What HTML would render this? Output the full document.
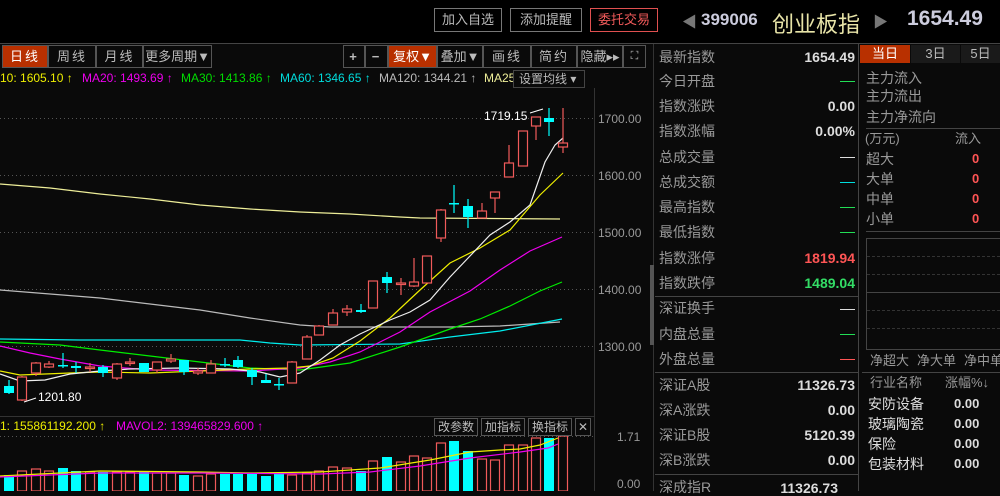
<!DOCTYPE html>
<html><head><meta charset="utf-8"><style>
*{margin:0;padding:0;box-sizing:border-box}
body{width:1000px;height:491px;background:#0a0a0a;overflow:hidden;position:relative;font-family:"Liberation Sans","Noto Sans CJK SC",sans-serif;color:#aaa}
.a{position:absolute;white-space:nowrap}
.btn{position:absolute;border:1px solid #777;color:#bbb;font-size:13px;text-align:center;line-height:22px;height:24px;top:8px}
.tab{position:absolute;top:45px;height:23px;border:1px solid #555;color:#bbb;font-size:13px;text-align:center;line-height:21px;letter-spacing:2px;white-space:nowrap}
.lab{position:absolute;left:659px;font-size:14px;color:#999;line-height:16px;white-space:nowrap}
.val{position:absolute;right:145px;font-size:14px;font-weight:bold;color:#ddd;line-height:16px;font-family:"Liberation Sans",sans-serif;white-space:nowrap}
.dash{position:absolute;left:840px;width:15px;height:1px}
.r{position:absolute;font-size:13px;color:#999;line-height:16px;white-space:nowrap}
</style></head><body>
<div class="a" style="left:0;top:0;width:1000px;height:43px;background:#000"></div>
<div class="btn" style="left:434px;width:68px">加入自选</div>
<div class="btn" style="left:510px;width:72px">添加提醒</div>
<div class="btn" style="left:590px;width:68px;border-color:#e05050;color:#f05a5a">委托交易</div>
<div class="a" style="left:682px;top:11px;color:#777;font-size:15px">◀</div>
<div class="a" style="left:701px;top:10px;color:#ccd;font-size:17px;font-weight:bold">399006</div>
<div class="a" style="left:772px;top:7px;color:#e8e4a8;font-size:22px">创业板指</div>
<div class="a" style="left:873px;top:11px;color:#777;font-size:15px">▶</div>
<div class="a" style="left:907px;top:7px;color:#ccd;font-size:21px;font-weight:bold">1654.49</div>
<div class="a" style="left:0;top:43px;width:1000px;height:1px;background:#444"></div>

<div class="tab" style="left:2px;width:46px;background:#b83000;color:#fff">日线</div>
<div class="tab" style="left:48px;width:48px">周线</div>
<div class="tab" style="left:96px;width:47px">月线</div>
<div class="tab" style="left:143px;width:69px;letter-spacing:0">更多周期▼</div>
<div class="tab" style="left:343px;width:22px;font-weight:bold">+</div>
<div class="tab" style="left:365px;width:23px;font-weight:bold">−</div>
<div class="tab" style="left:388px;width:49px;background:#b83000;color:#fff;letter-spacing:0">复权▼</div>
<div class="tab" style="left:437px;width:46px;letter-spacing:0">叠加▼</div>
<div class="tab" style="left:483px;width:48px">画线</div>
<div class="tab" style="left:531px;width:46px">简约</div>
<div class="tab" style="left:577px;width:46px;letter-spacing:0">隐藏▸▸</div>
<div class="tab" style="left:623px;width:23px;letter-spacing:0;font-size:11px">⛶</div>

<div class="a" style="left:0;top:71px;font-size:12px;color:#ee0">10: 1605.10 ↑</div>
<div class="a" style="left:82px;top:71px;font-size:12px;color:#e0e">MA20: 1493.69 ↑</div>
<div class="a" style="left:181px;top:71px;font-size:12px;color:#0d0">MA30: 1413.86 ↑</div>
<div class="a" style="left:280px;top:71px;font-size:12px;color:#0dd">MA60: 1346.65 ↑</div>
<div class="a" style="left:379px;top:71px;font-size:12px;color:#bbb">MA120: 1344.21 ↑</div>
<div class="a" style="left:484px;top:71px;font-size:12px;color:#ee9">MA25</div>
<div class="a" style="left:513px;top:70px;width:72px;height:18px;border:1px solid #444;background:#0a0a0a;font-size:12px;color:#bbb;line-height:16px;padding-left:5px">设置均线 ▾</div>

<svg class="a" style="left:0;top:0" width="655" height="491">
<g stroke="#555" stroke-dasharray="1 3">
<line x1="0" y1="118.5" x2="594" y2="118.5"/><line x1="0" y1="175.5" x2="594" y2="175.5"/><line x1="0" y1="232.5" x2="594" y2="232.5"/><line x1="0" y1="289.5" x2="594" y2="289.5"/><line x1="0" y1="346.5" x2="594" y2="346.5"/><line x1="0" y1="436.5" x2="594" y2="436.5"/>
</g>
<line x1="594.5" y1="88" x2="594.5" y2="491" stroke="#333"/>
<line x1="653.5" y1="44" x2="653.5" y2="491" stroke="#333"/>
<line x1="0" y1="416.5" x2="594" y2="416.5" stroke="#333"/>
<rect x="650" y="265" width="4" height="80" fill="#555"/>
<g font-family="Liberation Sans" font-size="12" fill="#999">
<text x="598" y="123">1700.00</text><text x="598" y="180">1600.00</text><text x="598" y="237">1500.00</text><text x="598" y="294">1400.00</text><text x="598" y="351">1300.00</text>
<text x="617" y="441">1.71</text><text x="617" y="488">0.00</text>
</g>
<g fill="none" stroke-width="1.2">
<polyline stroke="#ee9" points="0,184 50,188 100,194 150,199 200,205 250,209 300,212 350,214 400,217 420,218 560,219"/>
<polyline stroke="#bbb" points="0,290 50,294 100,298 150,304 200,310 250,318 300,325 330,327 350,327 450,327 500,326 560,322"/>
<polyline stroke="#0ee" points="0,339 80,340 240,340 270,343 300,345 400,344 450,337 500,331 562,319"/>
<polyline stroke="#0e0" points="0,342 60,345 100,350 150,356 200,362 250,368 300,370 350,363 400,347 450,329 480,319 510,306 540,291 562,282"/>
<polyline stroke="#e0e" points="0,346 30,353 60,359 100,366 150,370 250,371 300,368 330,362 360,352 400,332 430,312 470,291 500,270 530,251 562,237"/>
<polyline stroke="#ee0" points="0,371 20,375 70,373 100,372 150,373 200,371 250,369 290,368 310,366 333,358 360,341 390,318 420,290 450,263 480,248 510,230 540,195 563,173"/>
<polyline stroke="#eee" points="0,374 20,381 45,380 70,374 100,371 130,369 180,368 230,369 260,372 280,377 300,373 320,360 340,345 360,334 390,320 410,312 430,300 450,277 470,256 490,235 510,222 530,205 545,162 555,145 563,138"/>
</g>
<g id="c" stroke-width="1.2"></g>
<g fill="#fff" font-family="Liberation Sans" font-size="12"><text x="38" y="401">1201.80</text><text x="484" y="120">1719.15</text></g>
<polyline points="24,402 36,398" stroke="#fff" fill="none"/><polyline points="530,113 543,109" stroke="#fff" fill="none"/>
<g id="v" stroke-width="1.2"></g>
<polyline fill="none" stroke="#ee0" stroke-width="1.2" points="0,476 100,471 200,472 250,473 320,472 380,468 430,460 470,452 500,450 520,449 540,445 558,438"/>
<polyline fill="none" stroke="#e0e" stroke-width="1.2" points="0,477 100,473 200,473 320,474 370,472 420,466 470,458 520,452 548,448 558,444"/>
</svg>
<script>
var C=[[9,'c',386,393,380,394],[22,'r',377,400,376,401],[36,'r',363,373,362,376],[49,'r',364,367,361,368],[63,'c',365,366,353,368],[76,'c',366,368,362,373],[90,'r',367,368,363,372],[103,'c',367,373,365,377],[117,'r',364,378,363,380],[130,'r',362,363,358,366],[144,'c',363,372,363,372],[157,'r',362,370,362,373],[171,'r',359,361,354,363],[184,'c',360,372,360,375],[198,'r',371,373,368,375],[211,'r',364,373,360,373],[225,'c',364,365,358,367],[238,'c',360,367,356,368],[252,'c',370,377,368,385],[266,'c',380,383,374,383],[279,'c',384,385,378,390],[292,'r',362,383,361,383],[307,'r',337,359,335,359],[319,'r',326,335,325,335],[333,'r',313,325,309,325],[347,'r',309,312,305,316],[361,'c',310,312,304,313],[373,'r',281,308,281,308],[387,'c',277,283,272,293],[401,'r',283,284,278,295],[414,'r',282,286,258,287],[427,'r',256,283,256,283],[441,'r',210,238,209,242],[454,'c',203,204,185,213],[468,'c',206,217,199,228],[482,'r',211,218,203,218],[495,'r',192,198,192,213],[509,'r',163,177,145,177],[523,'r',131,166,131,166],[536,'r',117,126,117,140],[549,'c',118,122,108,136],[563,'r',143,147,108,153]];
var V=[475,471,469,471,468,471,472,472,472,472,472,473,473,475,476,474,474,474,473,476,473,475,473,471,467,468,471,461,457,462,456,458,443,441,451,459,460,445,445,438,438,436];
var h='',v='';
C.forEach(function(k,i){var col=k[1]=='r'?'#f05a5a':'#0ff';
h+='<line x1="'+k[0]+'" y1="'+k[4]+'" x2="'+k[0]+'" y2="'+k[5]+'" stroke="'+col+'"/>';
var bh=Math.max(k[3]-k[2],1.5);
if(k[1]=='r')h+='<rect x="'+(k[0]-4.5)+'" y="'+k[2]+'" width="9" height="'+bh+'" fill="#0a0a0a" stroke="'+col+'"/>';
else h+='<rect x="'+(k[0]-5)+'" y="'+k[2]+'" width="10" height="'+bh+'" fill="'+col+'"/>';
var t=V[i];
if(k[1]=='r')v+='<rect x="'+(k[0]-4.5)+'" y="'+t+'" width="9" height="'+(491-t)+'" fill="none" stroke="#f05a5a"/>';
else v+='<rect x="'+(k[0]-5)+'" y="'+t+'" width="10" height="'+(491-t)+'" fill="#0ff"/>';
});
document.getElementById('c').innerHTML=h;document.getElementById('v').innerHTML=v;
</script>

<div class="a" style="left:0;top:419px;font-size:12px;color:#ee0">1: 155861192.200 ↑</div>
<div class="a" style="left:116px;top:419px;font-size:12px;color:#e0e">MAVOL2: 139465829.600 ↑</div>
<div class="a" style="left:434px;top:418px;width:44px;height:18px;border:1px solid #555;font-size:12px;color:#bbb;text-align:center;line-height:16px">改参数</div>
<div class="a" style="left:481px;top:418px;width:44px;height:18px;border:1px solid #555;font-size:12px;color:#bbb;text-align:center;line-height:16px">加指标</div>
<div class="a" style="left:528px;top:418px;width:44px;height:18px;border:1px solid #555;font-size:12px;color:#bbb;text-align:center;line-height:16px">换指标</div>
<div class="a" style="left:575px;top:418px;width:16px;height:18px;border:1px solid #555;font-size:12px;color:#bbb;text-align:center;line-height:16px">✕</div>

<div class="lab" style="top:49px">最新指数</div><div class="val" style="top:49px">1654.49</div>
<div class="lab" style="top:73px">今日开盘</div><div class="dash" style="top:81px;background:#2d5"></div>
<div class="lab" style="top:98px">指数涨跌</div><div class="val" style="top:98px">0.00</div>
<div class="lab" style="top:123px">指数涨幅</div><div class="val" style="top:123px">0.00%</div>
<div class="lab" style="top:149px">总成交量</div><div class="dash" style="top:157px;background:#ddd"></div>
<div class="lab" style="top:174px">总成交额</div><div class="dash" style="top:182px;background:#0dd"></div>
<div class="lab" style="top:199px">最高指数</div><div class="dash" style="top:207px;background:#2d5"></div>
<div class="lab" style="top:224px">最低指数</div><div class="dash" style="top:232px;background:#2d5"></div>
<div class="lab" style="top:250px">指数涨停</div><div class="val" style="top:250px;color:#f55">1819.94</div>
<div class="lab" style="top:275px">指数跌停</div><div class="val" style="top:275px;color:#3d6">1489.04</div>
<div class="a" style="left:655px;top:296px;width:203px;height:1px;background:#444"></div>
<div class="lab" style="top:300px">深证换手</div><div class="dash" style="top:309px;background:#ddd"></div>
<div class="lab" style="top:326px">内盘总量</div><div class="dash" style="top:334px;background:#2d5"></div>
<div class="lab" style="top:351px">外盘总量</div><div class="dash" style="top:359px;background:#f55"></div>
<div class="a" style="left:655px;top:372px;width:203px;height:1px;background:#444"></div>
<div class="lab" style="top:377px">深证A股</div><div class="val" style="top:377px">11326.73</div>
<div class="lab" style="top:402px">深A涨跌</div><div class="val" style="top:402px">0.00</div>
<div class="lab" style="top:427px">深证B股</div><div class="val" style="top:427px">5120.39</div>
<div class="lab" style="top:452px">深B涨跌</div><div class="val" style="top:452px">0.00</div>
<div class="a" style="left:655px;top:474px;width:203px;height:1px;background:#444"></div>
<div class="lab" style="top:479px">深成指R</div><div class="val" style="top:480px;right:162px">11326.73</div>
<div class="a" style="left:858px;top:44px;width:1px;height:447px;background:#444"></div>

<div class="a" style="left:860px;top:45px;width:50px;height:18px;background:#b83000;color:#fff;font-size:13px;text-align:center;line-height:18px">当日</div>
<div class="a" style="left:911px;top:45px;width:49px;height:18px;background:#1a1a1a;color:#bbb;font-size:13px;text-align:center;line-height:18px">3日</div>
<div class="a" style="left:961px;top:45px;width:39px;height:18px;background:#1a1a1a;color:#bbb;font-size:13px;text-align:center;line-height:18px">5日</div>
<div class="r" style="left:866px;top:70px;font-size:14px">主力流入</div>
<div class="r" style="left:866px;top:88px;font-size:14px">主力流出</div>
<div class="r" style="left:866px;top:109px;font-size:14px">主力净流向</div>
<div class="a" style="left:866px;top:128px;width:134px;height:1px;background:#444"></div>
<div class="r" style="left:865px;top:131px">(万元)</div><div class="r" style="left:955px;top:131px">流入</div>
<div class="r" style="left:866px;top:151px;font-size:14px">超大</div><div class="r" style="left:972px;top:151px;color:#f55;font-weight:bold">0</div>
<div class="r" style="left:866px;top:171px;font-size:14px">大单</div><div class="r" style="left:972px;top:171px;color:#f55;font-weight:bold">0</div>
<div class="r" style="left:866px;top:191px;font-size:14px">中单</div><div class="r" style="left:972px;top:191px;color:#f55;font-weight:bold">0</div>
<div class="r" style="left:866px;top:211px;font-size:14px">小单</div><div class="r" style="left:972px;top:211px;color:#f55;font-weight:bold">0</div>
<div class="a" style="left:866px;top:231px;width:134px;height:1px;background:#444"></div>
<div class="a" style="left:866px;top:238px;width:140px;height:112px;border:1px solid #444"></div>
<div class="a" style="left:867px;top:256px;width:133px;border-top:1px dashed #333"></div>
<div class="a" style="left:867px;top:274px;width:133px;border-top:1px dashed #333"></div>
<div class="a" style="left:867px;top:292px;width:133px;height:1px;background:#444"></div>
<div class="a" style="left:867px;top:310px;width:133px;border-top:1px dashed #333"></div>
<div class="a" style="left:867px;top:328px;width:133px;border-top:1px dashed #333"></div>
<div class="r" style="left:870px;top:353px">净超大</div><div class="r" style="left:917px;top:353px">净大单</div><div class="r" style="left:964px;top:353px">净中单</div>
<div class="a" style="left:862px;top:372px;width:138px;height:1px;background:#444"></div>
<div class="r" style="left:870px;top:375px">行业名称</div><div class="r" style="left:945px;top:375px">涨幅%↓</div>
<div class="r" style="left:868px;top:396px;color:#ddd;font-size:14px">安防设备</div><div class="r" style="left:954px;top:396px;color:#ddd;font-weight:bold">0.00</div>
<div class="r" style="left:868px;top:416px;color:#ddd;font-size:14px">玻璃陶瓷</div><div class="r" style="left:954px;top:416px;color:#ddd;font-weight:bold">0.00</div>
<div class="r" style="left:868px;top:436px;color:#ddd;font-size:14px">保险</div><div class="r" style="left:954px;top:436px;color:#ddd;font-weight:bold">0.00</div>
<div class="r" style="left:868px;top:456px;color:#ddd;font-size:14px">包装材料</div><div class="r" style="left:954px;top:456px;color:#ddd;font-weight:bold">0.00</div>
</body></html>
